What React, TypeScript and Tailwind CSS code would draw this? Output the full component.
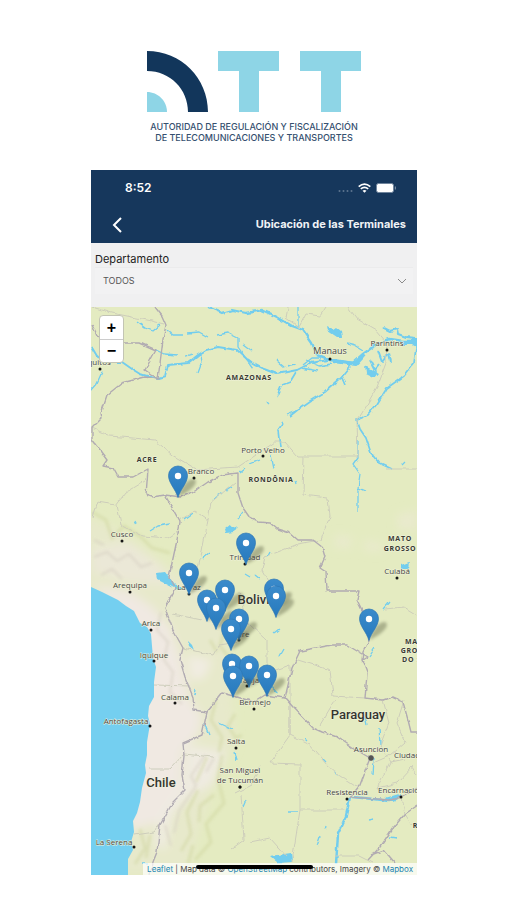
import { useState } from 'react';

const departments = ['TODOS', 'Chuquisaca', 'La Paz', 'Cochabamba', 'Oruro', 'Potosí', 'Tarija', 'Santa Cruz', 'Beni', 'Pando'];

// centre of each pin's head, north to south so that southern pins overlap northern ones
const terminals = [
  [178, 476], [246, 543], [189, 573], [274, 589], [225, 590], [276, 596], [207, 600], [216, 608],
  [239, 619], [369, 619], [231, 629], [232, 664], [249, 666], [267, 675], [233, 676],
];

const cities = [
  { name: 'Manaus', x: 330, y: 354, dot: [330, 359], size: 9 },
  { name: 'Parintins', x: 387, y: 346, dot: [387, 350], size: 8 },
  { name: 'Porto Velho', x: 263, y: 453, dot: [263, 456], size: 8 },
  { name: 'Branco', x: 201, y: 474, dot: [194, 478], size: 8 },
  { name: 'Cusco', x: 122, y: 537, dot: [122, 541], size: 8 },
  { name: 'Trinidad', x: 245, y: 560, dot: [245, 564], size: 8 },
  { name: 'Arequipa', x: 130, y: 588, dot: [130, 592], size: 8 },
  { name: 'La Paz', x: 189, y: 590, dot: [189, 594], size: 8 },
  { name: 'Cuiabá', x: 397, y: 574, dot: [397, 578], size: 8 },
  { name: 'Sucre', x: 239, y: 637, dot: [239, 640], size: 8 },
  { name: 'Arica', x: 151, y: 626, dot: [151, 630], size: 8 },
  { name: 'Iquique', x: 154, y: 658, dot: [154, 661], size: 8 },
  { name: 'Tarija', x: 249, y: 683, dot: [247, 686], size: 8 },
  { name: 'Calama', x: 175, y: 700, dot: [175, 703], size: 8 },
  { name: 'Bermejo', x: 255, y: 705, dot: [254, 709], size: 8 },
  { name: 'Antofagasta', x: 126, y: 724, dot: [150, 726], size: 8 },
  { name: 'Salta', x: 236, y: 744, dot: [236, 748], size: 8 },
  { name: 'San Miguel', x: 240, y: 773, dot: [240, 787], size: 8 },
  { name: 'de Tucumán', x: 240, y: 783, dot: [240, 787], size: 8 },
  { name: 'Asuncion', x: 371, y: 752, dot: [371, 758], size: 8 },
  { name: 'Ciudad', x: 407, y: 758, dot: [430, 758], size: 8 },
  { name: 'Resistencia', x: 347, y: 795, dot: [347, 799], size: 8 },
  { name: 'Encarnación', x: 401, y: 793, dot: [401, 797], size: 8 },
  { name: 'La Serena', x: 114, y: 845, dot: [134, 847], size: 8 },
];

const regions = [
  { name: 'AMAZONAS', x: 249, y: 380 },
  { name: 'ACRE', x: 147, y: 462 },
  { name: 'RONDÔNIA', x: 271, y: 482 },
  { name: 'MATO', x: 400, y: 541 },
  { name: 'GROSSO', x: 400, y: 551 },
  { name: 'MATO', x: 417, y: 644 },
  { name: 'GROSSO', x: 417, y: 653 },
  { name: 'DO SUL', x: 417, y: 662 },
  { name: 'RIO', x: 420, y: 828 },
];

const countries = [
  { name: 'Bolivia', x: 257, y: 604 },
  { name: 'Paraguay', x: 358, y: 719 },
  { name: 'Chile', x: 161, y: 787 },
];

function Logo() {
  return (
    <svg viewBox="0 0 214 61" className="block w-[214px]" role="img" aria-label="ATT">
      <path d="M0 0C34 0 61 27 61 61H41C41 38 23 20 0 20Z" fill="#12365b" />
      <path d="M0 41C11 41 20 50 20 61H0Z" fill="#8ed5e6" />
      <path d="M71 0H132V20H112V61H92V20H71ZM153 0H214V20H194V61H174V20H153Z" fill="#8ed5e6" />
    </svg>
  );
}

function StatusIcons() {
  return (
    <svg viewBox="0 0 58 12" className="block w-[58px]" aria-hidden="true">
      <g fill="#5d748f">
        <circle cx="1.5" cy="9" r="1" />
        <circle cx="5.5" cy="9" r="1" />
        <circle cx="9.5" cy="9" r="1" />
        <circle cx="13.5" cy="9" r="1" />
      </g>
      <g fill="none" stroke="#fff" strokeWidth="1.7">
        <path d="M20.7 4.6Q26.5 -.4 32.3 4.6" />
        <path d="M22.8 6.9Q26.5 3.7 30.2 6.9" />
      </g>
      <path d="M24.5 8.7Q26.5 7.2 28.5 8.7L26.5 10.8Z" fill="#fff" />
      <rect x="38.5" y="1.5" width="17" height="9" rx="2" fill="#fff" stroke="#6f849c" />
      <path d="M57.3 4.5V7.5" stroke="#8a9bb0" />
    </svg>
  );
}

function Pin({ x, y }: { x: number; y: number }) {
  return (
    <g transform={`translate(${x} ${y})`}>
      <path d="M0 21C3 11 9 3 16 3C21 5 16 14 0 21Z" fill="#3c4228" opacity=".34" filter="url(#soft)" />
      <path
        d="M0 21.5C-2.5 13-9.5 7-9.5-.5A9.5 9.5 0 0 1 9.5-.5C9.5 7 2.5 13 0 21.5Z"
        fill="url(#pin)"
        stroke="#2e77b5"
        strokeWidth=".7"
      />
      <circle r="3.2" fill="#fff" />
    </g>
  );
}

function TerrainMap() {
  return (
    <svg viewBox="91 307 326 568" className="block w-full bg-[#e4ebc1] font-['Open_Sans',sans-serif]" role="img" aria-label="Mapa de terminales">
      <defs>
        <linearGradient id="pin" x1="0" y1="0" x2="0" y2="1">
          <stop offset="0" stopColor="#3b8bcb" />
          <stop offset="1" stopColor="#2679bd" />
        </linearGradient>
        <filter id="soft" x="-50%" y="-50%" width="200%" height="200%"><feGaussianBlur stdDeviation="1.6" /></filter>
        <filter id="haze" x="-30%" y="-30%" width="160%" height="160%"><feGaussianBlur stdDeviation="5" /></filter>
        <filter id="jagged" filterUnits="userSpaceOnUse" x="85" y="300" width="340" height="580">
          <feTurbulence type="fractalNoise" baseFrequency=".13" numOctaves="2" seed="4" />
          <feDisplacementMap in="SourceGraphic" scale="4" xChannelSelector="R" yChannelSelector="G" />
        </filter>
      </defs>

      {/* Highlands and desert */}
      <g filter="url(#haze)">
        <path d="M85 515L108 525L140 545L172 570L200 585L225 620L232 690L235 745L212 790L185 875H100V600L85 590Z" fill="#e7e9cb" />
        <path d="M92 585L130 592L152 607L170 628L181 660L190 700L202 716L198 735L182 750L180 792L160 822L130 830L130 620Z" fill="#f0e9e2" />
        <path d="M186 745L225 752L212 785L190 795L172 815L165 850L155 845L160 815L183 783Z" fill="#efebe1" />
        <path d="M187 655L212 660L204 678L191 680Z" fill="#f1ece2" />
        <path d="M92 548L128 542L160 565L170 585L130 582L92 572Z" fill="#ebe8d7" />
        <path d="M336 535L352 537L350 548L334 547ZM365 540L385 545L378 552L364 550ZM397 515L417 510V530L398 530Z" fill="#e9eacd" />
      </g>
      <g fill="none" stroke="#cbd198" strokeWidth="3" opacity=".45" filter="url(#soft)">
        <path d="M92 512L106 520L112 538L124 526L141 537L152 548L170 553" />
        <path d="M222 755L218 779L224 803L206 824L211 842L195 860" />
        <path d="M235 714L228 726L236 738L242 735M216 700L211 720L222 737L219 752" />
        <path d="M198 790L187 812L191 834L181 851M207 757L196 782M214 795L200 806L199 822M193 845L188 864" />
        <path d="M216 604L226 624L220 646L231 660L225 678M210 640L217 652" />
        <path d="M140 829L145 848L135 864M150 835L146 858" />
      </g>
      <g fill="none" stroke="#d5cfc1" strokeWidth="2" opacity=".65" filter="url(#soft)">
        <path d="M94 557L107 552L117 561L129 554L141 567L152 563M101 575L112 569L122 579M94 540L104 545" />
        <path d="M161 612L157 630L168 642L164 660L173 672L170 692L182 704" />
        <path d="M205 755L191 776L196 786L179 811L174 833M165 825L171 846M214 758L206 772" />
      </g>

      {/* Pacific */}
      <path
        d="M91 587L102 592L118 600L126 606L134 611L137 617L140 623L147 627L151 634L152 646L153 658L156 667L154 682L154 697L149 706L148 716L150 724L147 742L147 755L145 765L146 773L142 788L140 802L137 813L133 821L134 832L131 842L133 850L128 859L128 875H91Z"
        fill="#74cff0"
      />

      {/* Rivers */}
      <g fill="none" stroke="#72cdee" strokeWidth="1.3" strokeLinejoin="round" filter="url(#jagged)">
        <path d="M208 307L222 313L232 310L246 313L252 312L262 310L277 317L292 326L303 330L312 343L317 355" strokeWidth="2.3" />
        <path d="M317 355L330 360L353 363L363 354L377 344L390 339L403 341L418 341" strokeWidth="2.6" />
        <path d="M333 361L356 364L364 355M401 343L418 343" strokeWidth="4" />
        <path d="M137 322L145 328L153 331L160 325M167 330L173 335L183 335M188 333L199 332L208 337M217 335L228 333L238 338L238 347L245 357L253 368" />
        <path d="M92 347L98 357L113 362L122 362L132 369L140 374L158 379L165 377L168 365L188 363L198 355L206 350L218 347L237 350L249 361L264 369L277 374L297 370L311 363L328 360" strokeWidth="1.9" />
        <path d="M156 350L164 354L178 355M185 356L192 354M201 354L202 362L198 373M102 372L97 383L90 391" />
        <path d="M243 345L251 351M248 359L252 362M302 368L318 371M277 360L285 367M306 360L320 366L331 364M303 365L312 358L320 358M287 366L296 364" />
        <path d="M353 363L341 378L325 392L310 401L300 408L290 416M342 378L345 385M283 423L278 430L280 448M296 372L290 382L282 385M281 387L277 396" strokeWidth="1.7" />
        <path d="M417 340L414 363L404 376L387 388L377 404L368 415L357 420L360 429L366 438L371 453L379 463L392 469" strokeWidth="1.7" />
        <path d="M358 440L358 457L353 464L360 474L358 488L365 491M358 488L358 512" />
        <path d="M370 360L375 370L379 365M378 351L382 362L389 353L391 362M384 328L390 331L397 329L398 334L406 337L415 338" strokeWidth="2" />
        <path d="M347 343L355 345L363 350M298 307L298 327M286 415L296 411M267 402L269 404" />
        <path d="M240 472L245 468M250 464L260 460M271 455L274 469M214 499L222 493M226 491L232 487M184 520L193 513M150 531L158 526L170 524M136 525L134 521" />
        <path d="M210 552L202 559M270 552L268 556M238 519L243 512M296 480L297 484M405 462L402 465M274 633L279 629M284 649L280 656M383 609L389 602" />
        <path d="M375 648L369 657M245 574L250 577M255 575L260 579M196 690L195 694M209 735L204 723M219 723L232 729M268 683L278 694M364 711L367 725M379 728L380 744M374 758L373 776" />
        <path d="M350 797L346 816L338 834L336 864" strokeWidth="2.5" />
        <path d="M352 797L373 799L389 801L401 796" strokeWidth="2.5" />
        <path d="M305 739L307 741M323 759L326 762M334 771L337 776M289 812L298 812M326 825L325 829M320 837L317 846M389 837L397 838M141 864L148 864M246 800L243 807M235 752L237 760M369 821L374 820" />
      </g>
      <g fill="#72cdee" filter="url(#jagged)">
        <path d="M327 326L333 329L336 327L341 331L342 337L337 337L328 331ZM365 366L378 373L374 378L366 374ZM411 338H418V348L411 344Z" />
        <path d="M157 573L165 572L169 577L174 584L186 588L178 590L168 585L158 580ZM188 641L192 645L194 650L189 646Z" />
        <path d="M225 529L229 526L233 528L238 526L234 532L226 533ZM401 565L409 562L408 569L401 569Z" />
        <path d="M270 856L291 853L292 862L278 863ZM385 798L399 794L394 802Z" />
      </g>

      {/* State borders */}
      <g fill="none" stroke="#cdcdbb" strokeWidth="1" filter="url(#jagged)">
        <path d="M92 428L110 436L155 440L172 455L198 470L222 468L238 467L253 457L275 442L285 442L298 457L304 457L303 495L328 498L330 516L321 540L298 544L265 557L262 570L270 584" />
        <path d="M348 307L357 319L376 330L387 343L386 363L377 387L362 413L357 421L358 456H304M387 469H417" />
        <path d="M288 307L286 318L299 327L306 314L320 316L326 307M92 307L112 313L152 321L164 324" />
        <path d="M145 481L125 493L116 505L97 502L92 517M117 505L121 525L143 536L168 538L177 532" />
        <path d="M180 520L195 511L208 520L211 502L235 483M208 520L202 552L198 567" />
        <path d="M172 614L202 620M183 648L213 655L219 645L239 642M239 592L249 623L267 640V673L290 665" />
        <path d="M298 660L330 670L333 696L365 698M385 609L404 607L417 615M290 665V735L270 763L300 764V810H345M300 810L292 862" />
        <path d="M290 735L310 745L327 765L337 774L358 788M290 700V735M335 700L320 725M404 700L397 723L405 742L389 756L373 763" />
        <path d="M383 700L389 722L380 746L391 762L405 759M390 762L377 788L397 783L412 767L417 775M402 797L405 814L412 825" />
        <path d="M149 769L170 769L184 754L213 757M134 835L154 832L162 822M190 686L155 685M235 793L251 785L260 765M250 842L270 838L287 857M335 856L359 856L373 863M241 795L244 840L230 850" />
      </g>

      {/* Country borders */}
      <g fill="none" stroke="#b1abb2" strokeWidth="1.4" strokeLinejoin="round" filter="url(#jagged)">
        <path d="M155 307L162 316L166 325L163 340L160 363L158 379M92 325L97 336L123 343L140 343L156 350L145 370L158 379L145 377L122 383L107 395L101 413L102 418L92 428V440L107 460L103 466L113 468L118 477L133 477L148 469L146 495L152 497L165 495L180 497L192 493L208 482L222 475L238 473V493L243 508L250 518L258 522L270 523L277 529L290 533L298 540L313 540L322 547L325 557L320 568L326 572L327 591L359 591L357 600L363 612L369 620V640L363 652L362 660L367 673L365 698L383 700L392 697L403 702L408 720L411 732H417" />
        <path d="M165 495L180 522L177 540L172 563L169 577L175 588L165 608L173 630L183 648L180 660L185 677L193 697L194 710L207 712L203 730L202 735L183 743L184 756L182 775L185 790L173 802L160 825L157 852L153 862L150 875" />
        <path d="M207 712L222 693L237 697L254 702L265 695L285 698L292 668L300 651L332 645L347 645L367 657L362 660M285 698L293 707L313 728L322 732L337 737L353 748L370 758L360 785L350 797L390 800L402 797L417 788" />
        <path d="M418 805L405 814L393 828L380 847L368 860M371 855L384 850L395 863" />
      </g>

      {/* Labels */}
      <g textAnchor="middle" paintOrder="stroke" stroke="#f0f3dd" strokeWidth="1" strokeLinejoin="round">
        {cities.map((city) => (
          <g key={city.name}>
            <circle cx={city.dot[0]} cy={city.dot[1]} r="1.5" fill="#161616" stroke="none" />
            <text x={city.x} y={city.y} fontSize={city.size} fontWeight="500" fill="#454540">{city.name}</text>
          </g>
        ))}
        <circle cx="371" cy="758" r="2.5" fill="#555" stroke="#888" />
        <text x="98" y="365" fontSize="8" fontWeight="500" fill="#454540">Iquitos</text>
        <circle cx="100" cy="369" r="1.5" fill="#161616" stroke="none" />
        {regions.map((region, i) => (
          <text key={i} x={region.x} y={region.y} fontSize="7" fontWeight="700" fill="#3a3b33" className="tracking-widest">
            {region.name}
          </text>
        ))}
        {countries.map((country) => (
          <text key={country.name} x={country.x} y={country.y} fontSize="13" fontWeight="500" fill="#35352f" className="font-['Roboto',sans-serif]">
            {country.name}
          </text>
        ))}
      </g>

      {terminals.map(([x, y]) => (
        <Pin key={`${x}-${y}`} x={x} y={y} />
      ))}
    </svg>
  );
}

export default function App() {
  const [department, setDepartment] = useState('TODOS');

  return (
    <main className="min-h-screen bg-white pt-[51px] pr-[90px] pb-6 pl-[91px] font-['Inter',sans-serif]">
      <header className="flex flex-col items-center">
        <Logo />
        <p className="mt-[9px] text-center text-[9px] leading-[11px] font-medium whitespace-nowrap text-[#35506f]">
          AUTORIDAD DE REGULACIÓN Y FISCALIZACIÓN
          <br />
          DE TELECOMUNICACIONES Y TRANSPORTES
        </p>
      </header>

      <section className="mt-[27px]">
        {/* Status bar and title */}
        <div className="bg-[#16375c] text-white">
          <div className="flex h-9 items-center justify-between pr-[21px] pl-[34px]">
            <span className="text-xs font-semibold">8:52</span>
            <StatusIcons />
          </div>
          <div className="flex h-[37px] items-center justify-between pr-[11px] pl-5">
            <button type="button" aria-label="Volver">
              <svg viewBox="0 0 12 16" className="block w-3" fill="none" stroke="#fff" strokeWidth="2">
                <path d="M10 1L3 8L10 15" />
              </svg>
            </button>
            <h1 className="text-[11px] font-bold text-[#f0f3f6]">Ubicación de las Terminales</h1>
          </div>
        </div>

        {/* Department filter */}
        <div className="h-16 bg-[#f0f0f1] pt-2">
          <label htmlFor="department" className="block pl-1 text-[11px] leading-4 text-[#222]">
            Departamento
          </label>
          <div className="relative mx-1 border-t border-[#ebebec] bg-[#f2f2f3]">
            <select
              id="department"
              value={department}
              onChange={(e) => setDepartment(e.target.value)}
              className="block h-[26px] w-full appearance-none bg-transparent pl-2 text-[9px] text-[#555]"
            >
              {departments.map((name) => (
                <option key={name}>{name}</option>
              ))}
            </select>
            <svg viewBox="0 0 10 6" className="pointer-events-none absolute top-[10px] right-[6px] w-[10px]" fill="none" stroke="#8b8b8b">
              <path d="M1 1L5 5L9 1" />
            </svg>
          </div>
        </div>

        <div className="relative overflow-hidden">
          <TerrainMap />
          <div className="absolute top-2 left-2 flex flex-col overflow-hidden rounded-sm border border-[#c3c5b4] bg-white">
            <button type="button" aria-label="Acercar" className="h-6 w-[23px] border-b border-[#ccc] font-['Liberation_Sans',sans-serif] text-base leading-5 font-bold text-black">
              +
            </button>
            <button type="button" aria-label="Alejar" className="h-[22px] w-[23px] font-['Liberation_Sans',sans-serif] text-base leading-5 font-bold text-black">
              −
            </button>
          </div>
          <div className="absolute right-0 bottom-0 bg-white/70 px-1 text-[8px] leading-3 whitespace-nowrap text-[#444]">
            <a href="#leaflet" className="text-[#2184b0]">Leaflet</a> | Map data ©{' '}
            <a href="#openstreetmap" className="text-[#2184b0]">OpenStreetMap</a> contributors, Imagery ©{' '}
            <a href="#mapbox" className="text-[#2184b0]">Mapbox</a>
          </div>
          <div className="absolute inset-x-0 bottom-[6px] mx-auto h-1 w-[117px] rounded-full bg-black" />
        </div>
      </section>
    </main>
  );
}
